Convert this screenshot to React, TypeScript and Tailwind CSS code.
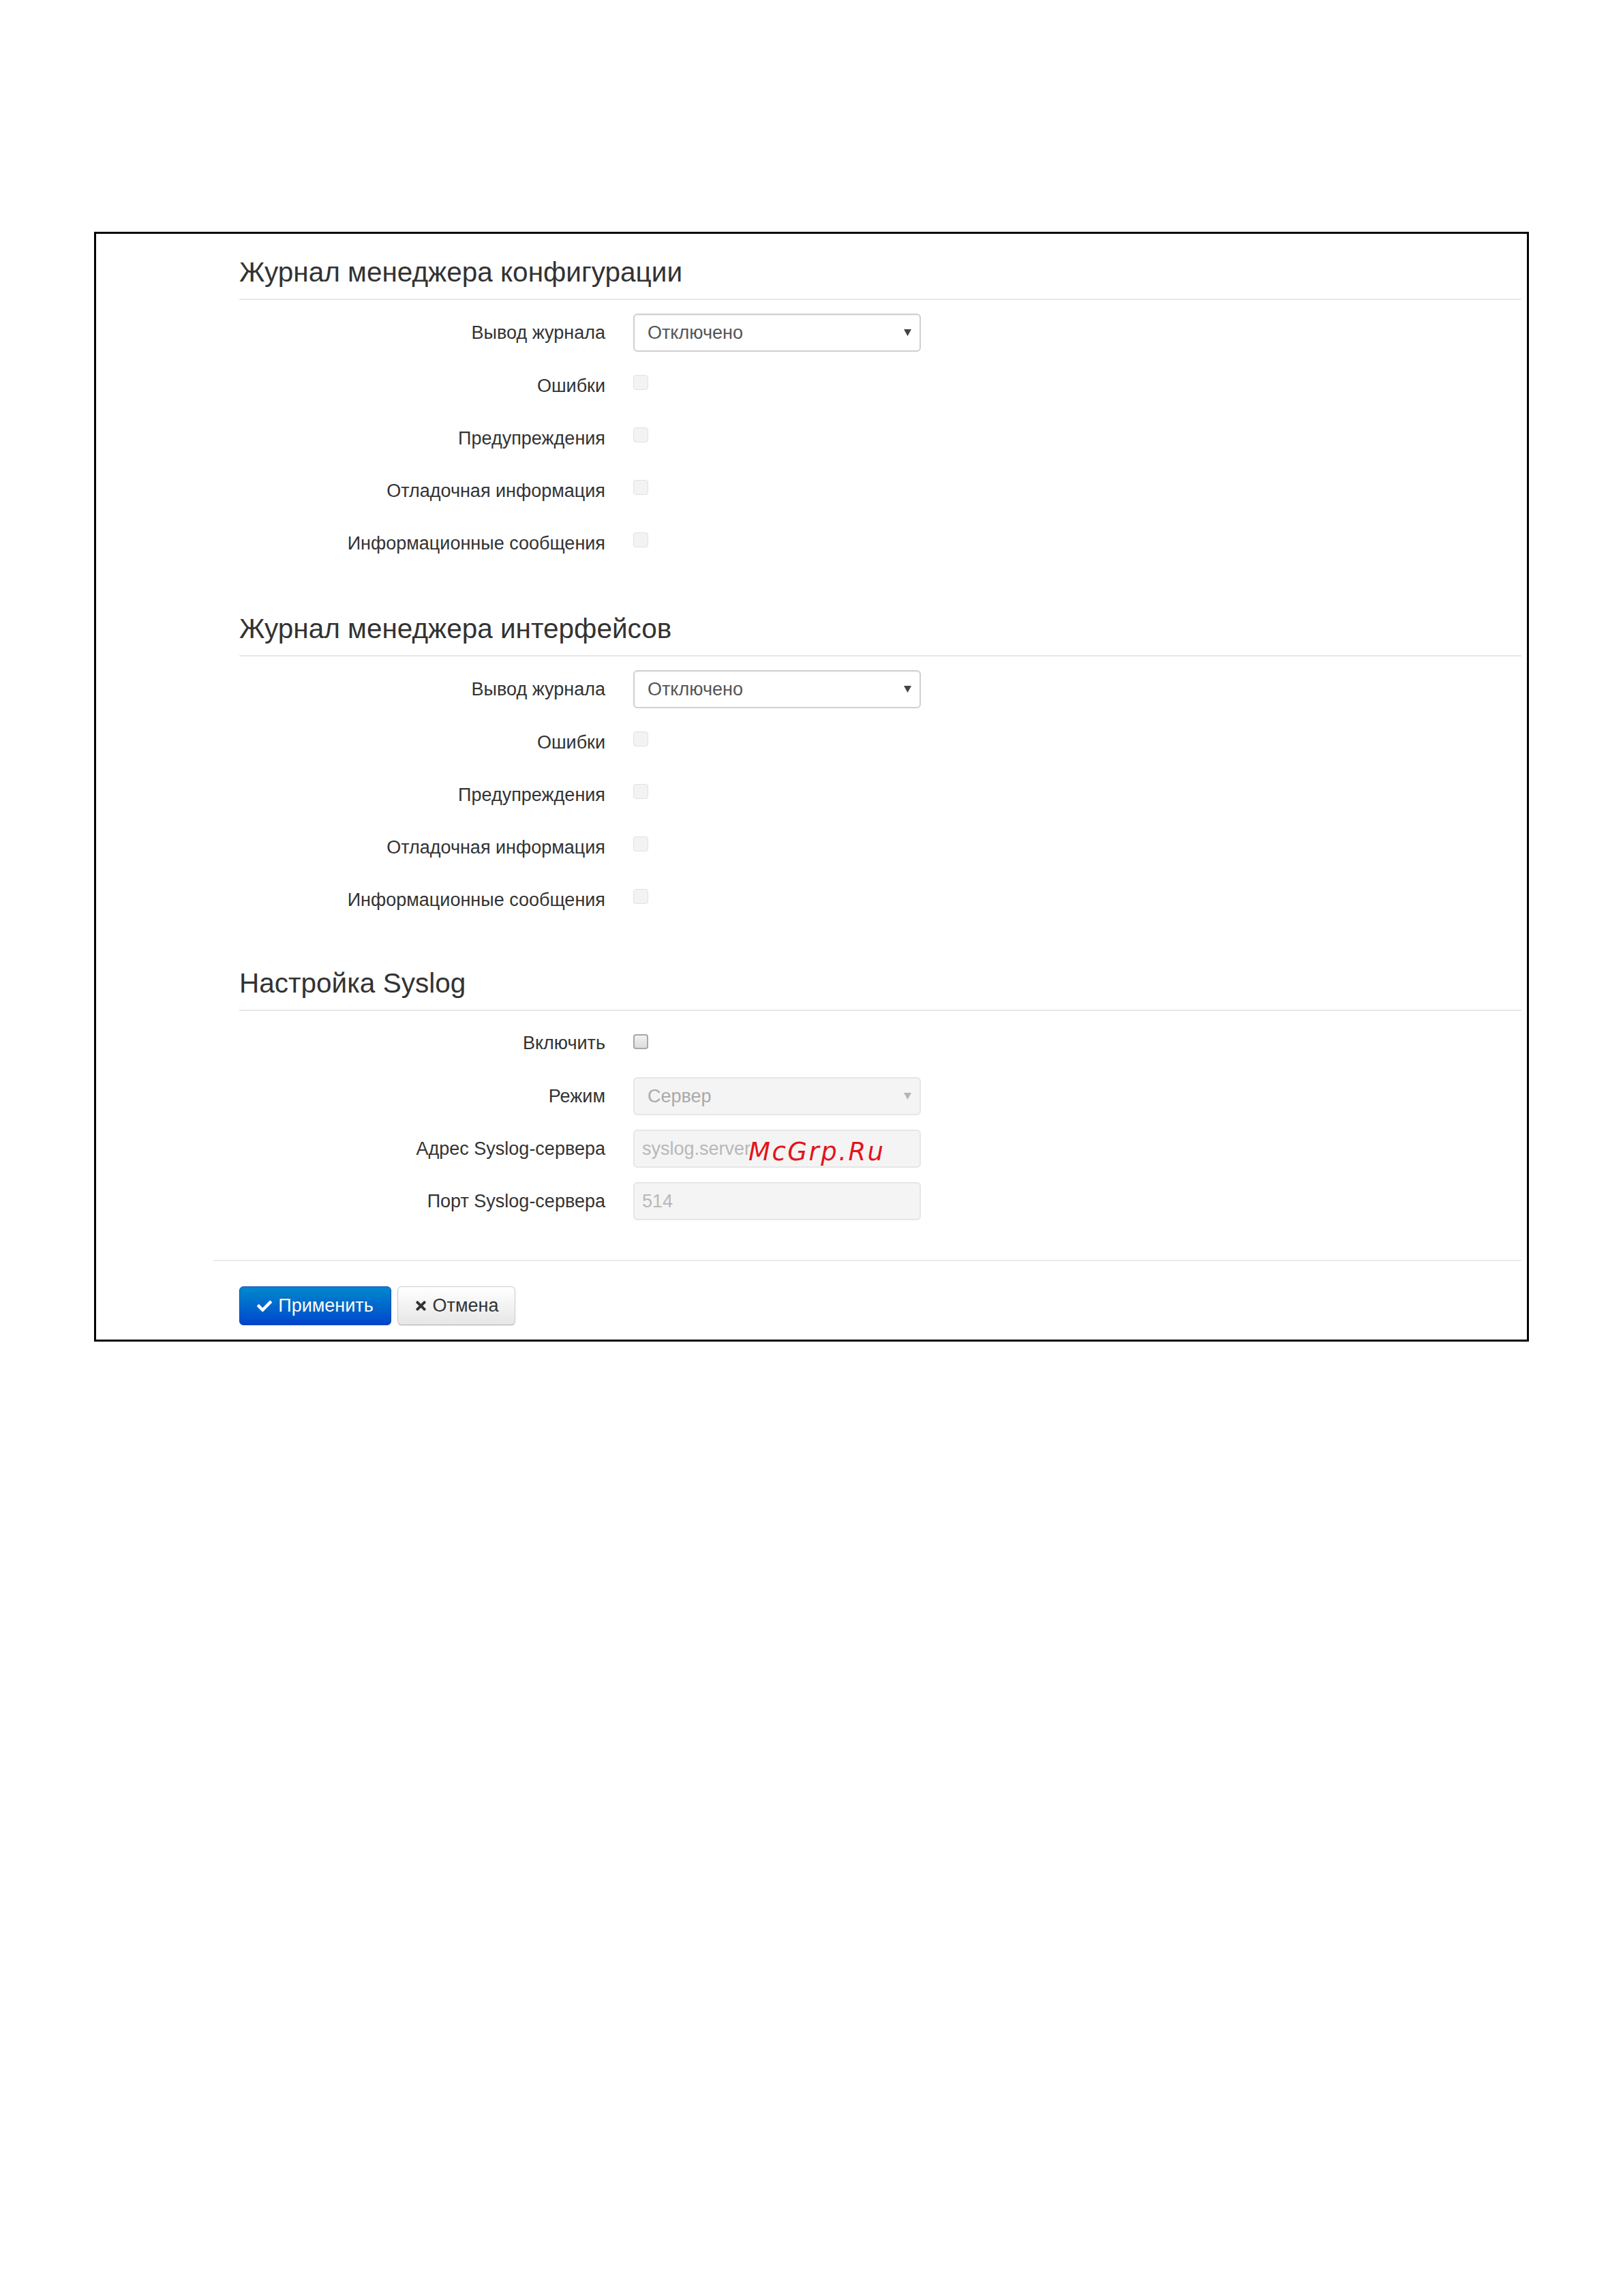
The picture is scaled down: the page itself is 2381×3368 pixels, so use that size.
import React from 'react'
import { FaCheck, FaTimes } from 'react-icons/fa'

const font = { fontFamily: '"Liberation Sans", Arial, "Noto Sans CJK SC", sans-serif' }

function Heading({ title }: { title: string }) {
  return (
    <div>
      <h3 className="text-[40.5px] leading-[43px] font-normal text-[#333]">{title}</h3>
      <div className="mt-[17px] h-[2px] bg-[#e8e8e8]" />
    </div>
  )
}

function Label({ text, className }: { text: string; className?: string }) {
  return <div className={'w-[537px] shrink-0 pr-0 text-right text-[27px] leading-[30px] text-[#333] ' + (className ?? '')}>{text}</div>
}

function Arrow({ muted }: { muted?: boolean }) {
  return (
    <svg width="11" height="10" viewBox="0 0 11 10" className="absolute right-[12px] top-[21px]">
      <path d="M0 0H11L5.5 10Z" fill={muted ? '#b5b5b5' : '#444'} />
    </svg>
  )
}

function SelectRow({ label, value, disabled }: { label: string; value: string; disabled?: boolean }) {
  return (
    <div className="flex h-[56px] items-center gap-[41px]">
      <Label text={label} />
      <div
        className={
          'relative flex h-[56px] w-[422px] items-center rounded-[6px] border-2 pl-[19px] text-[27px] ' +
          (disabled
            ? 'border-[#e6e6e6] bg-[#f4f4f4] text-[#aaa]'
            : 'border-[#d0d0d0] bg-white text-[#555] shadow-[inset_0_1px_2px_rgba(0,0,0,0.06)]')
        }
      >
        {value}
        <Arrow muted={disabled} />
      </div>
    </div>
  )
}

function InputRow({ label, value, children }: { label: string; value: string; children?: React.ReactNode }) {
  return (
    <div className="flex h-[56px] items-center gap-[41px]">
      <Label text={label} />
      <div className="relative flex h-[56px] w-[422px] items-center rounded-[6px] border-2 border-[#e6e6e6] bg-[#f4f4f4] pl-[11px] text-[27px] text-[#b8b8b8]">
        {value}
        {children}
      </div>
    </div>
  )
}

function CheckRow({ label }: { label: string }) {
  return (
    <div className="flex h-[77px] items-start gap-[41px]">
      <Label text={label} className="pt-[18px]" />
      <div className="mt-[17px] h-[22px] w-[22px] rounded-[4px] border border-[#e2e2e2] bg-[#f3f3f3]" />
    </div>
  )
}

function LogSection({ title }: { title: string }) {
  return (
    <section>
      <Heading title={title} />
      <div className="mt-[20px]">
        <div className="mb-[17px]">
          <SelectRow label="Вывод журнала" value="Отключено" />
        </div>
        <CheckRow label="Ошибки" />
        <CheckRow label="Предупреждения" />
        <CheckRow label="Отладочная информация" />
        <CheckRow label="Информационные сообщения" />
      </div>
    </section>
  )
}

export default function App() {
  return (
    <div className="min-h-[3368px] w-[2381px] bg-white pt-[340px] pl-[138px]" style={font}>
      <div className="w-[2105px] border-[3px] border-black bg-white pt-[35px] pb-[21px]">
        <div className="flex flex-col pl-[210px] pr-[8px]">
          <LogSection title="Журнал менеджера конфигурации" />
          <div className="mt-[60px]">
            <LogSection title="Журнал менеджера интерфейсов" />
          </div>
          <section className="mt-[57px]">
            <Heading title="Настройка Syslog" />
            <div className="mt-[20px] flex flex-col gap-[21px]">
              <div className="flex h-[56px] items-start gap-[41px]">
                <Label text="Включить" className="pt-[12px]" />
                <div className="mt-[14px] h-[22px] w-[22px] rounded-[4px] border-2 border-[#a8a8a8] bg-gradient-to-b from-[#f2f2f2] to-[#dcdcdc]" />
              </div>
              <SelectRow label="Режим" value="Сервер" disabled />
              <InputRow label="Адрес Syslog-сервера" value="syslog.server">
                <span
                  className="absolute left-[167px] top-[3px] text-[37px] italic tracking-[2.5px] text-[#e3141c]"
                  style={{ fontFamily: '"DejaVu Sans", sans-serif' }}
                >
                  McGrp.Ru
                </span>
              </InputRow>
              <InputRow label="Порт Syslog-сервера" value="514" />
            </div>
          </section>
        </div>
        <div className="mt-[58px] ml-[172px] mr-[8px] h-[2px] bg-[#ececec]" />
        <div className="mt-[37px] flex gap-[9px] pl-[210px]">
          <button className="flex h-[57px] w-[223px] items-center justify-center gap-[9px] rounded-[6px] border border-[#0045b8] bg-gradient-to-b from-[#0088cc] to-[#0044cc] text-[27px] text-white [text-shadow:0_-1px_0_rgba(0,0,0,0.25)]">
            <FaCheck className="h-[22px] w-[22px]" />
            Применить
          </button>
          <button className="flex h-[57px] w-[173px] items-center justify-center gap-[8px] rounded-[6px] border border-[#cccccc] border-b-[#b3b3b3] bg-gradient-to-b from-white to-[#e6e6e6] text-[27px] text-[#333] shadow-[0_1px_2px_rgba(0,0,0,0.08)]">
            <FaTimes className="h-[21px] w-[19px]" />
            Отмена
          </button>
        </div>
      </div>
    </div>
  )
}
